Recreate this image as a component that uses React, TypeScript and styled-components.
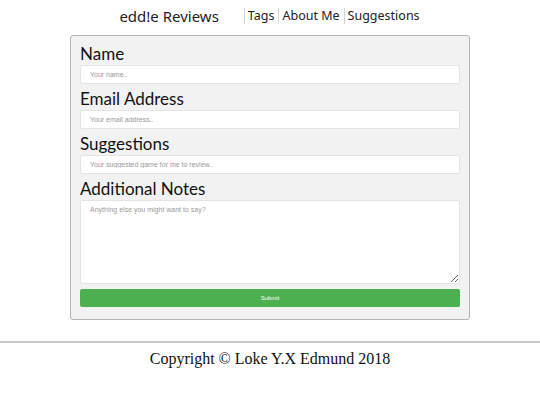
import styled, { createGlobalStyle } from "styled-components";

const GlobalStyle = createGlobalStyle`
  html, body {
    margin: 0;
    padding: 0;
    background: #fff;
  }
  * {
    box-sizing: border-box;
  }
`;

const Header = styled.header`
  height: 35px;
  display: flex;
  align-items: center;
  justify-content: center;
  padding: 0 0 4px 3px;
  font-family: "Noto Sans", "Open Sans", sans-serif;
  color: #222;
`;

const Brand = styled.div`
  font-size: 15px;
  margin-right: 25px;
`;

const Nav = styled.nav`
  display: flex;
  align-items: center;
`;

const NavLink = styled.a`
  font-size: 12.5px;
  color: #222;
  text-decoration: none;
  padding: 0 4px 0 3px;
  border-left: 1px solid #d4d4d4;
  line-height: 16px;
`;

const FormBox = styled.form`
  width: 400px;
  margin: 0 auto;
  background: #f2f2f2;
  border: 1px solid #b4b4b4;
  border-radius: 3px;
  padding: 8px 9px 12px;
  font-family: Lato, "Noto Sans", sans-serif;
`;

const Label = styled.label`
  display: block;
  font-size: 17px;
  line-height: 19px;
  color: #111;
  margin: 0 0 2px;
`;

const Input = styled.input`
  display: block;
  width: 100%;
  height: 19px;
  border: 1px solid #e4e4e4;
  border-radius: 2px;
  background: #fff;
  padding: 0 9px;
  font-family: "Liberation Sans", Arial, sans-serif;
  font-size: 7px;
  margin-bottom: 5px;
  &::placeholder {
    color: #999;
  }
`;

const TextArea = styled.textarea`
  display: block;
  width: 100%;
  height: 84px;
  border: 1px solid #e4e4e4;
  border-radius: 2px;
  background: #fff;
  padding: 5px 9px;
  font-family: "Liberation Sans", Arial, sans-serif;
  font-size: 7px;
  margin: 0 0 5px;
  resize: vertical;
  &::placeholder {
    color: #999;
  }
`;

const Submit = styled.button`
  display: block;
  width: 100%;
  height: 18px;
  border: none;
  border-radius: 2px;
  background: #4caf50;
  color: #fff;
  font-family: "Liberation Sans", Arial, sans-serif;
  font-size: 6px;
`;

const Rule = styled.hr`
  margin: 21px 0 0;
  border: none;
  border-top: 2px solid #c8c8c8;
`;

const Footer = styled.footer`
  text-align: center;
  font-family: "Liberation Serif", "Times New Roman", serif;
  font-size: 16px;
  color: #111;
  padding-top: 7px;
`;

export default function App() {
  return (
    <>
      <GlobalStyle />
      <Header>
        <Brand>edd!e Reviews</Brand>
        <Nav>
          <NavLink href="#">Tags</NavLink>
          <NavLink href="#">About Me</NavLink>
          <NavLink href="#">Suggestions</NavLink>
        </Nav>
      </Header>
      <FormBox onSubmit={(e) => e.preventDefault()}>
        <Label>Name</Label>
        <Input placeholder="Your name.." />
        <Label>Email Address</Label>
        <Input placeholder="Your email address.." />
        <Label>Suggestions</Label>
        <Input placeholder="Your suggested game for me to review.." />
        <Label>Additional Notes</Label>
        <TextArea placeholder="Anything else you might want to say?" />
        <Submit type="submit">Submit</Submit>
      </FormBox>
      <Rule />
      <Footer>Copyright © Loke Y.X Edmund 2018</Footer>
    </>
  );
}
